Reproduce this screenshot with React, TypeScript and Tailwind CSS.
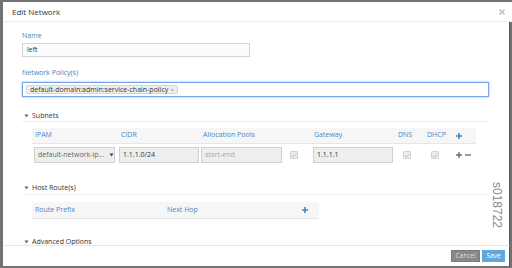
import { ReactNode } from "react";

function Check() {
  return (
    <div className="w-[8px] h-[8px] bg-[#ececec] border border-[#d2d2d2] rounded-[1px] flex items-center justify-center">
      <svg width="6" height="5" viewBox="0 0 6 5">
        <path d="M0.6 2.6 L2.3 4 L5.4 0.8" fill="none" stroke="#bdbdbd" strokeWidth="1" />
      </svg>
    </div>
  );
}

function Plus({ color = "#3a8ad0", sw = 1.6 }: { color?: string; sw?: number }) {
  return (
    <svg width="6" height="6" viewBox="0 0 6 6">
      <path d="M3 0 V6 M0 3 H6" stroke={color} strokeWidth={sw} />
    </svg>
  );
}

function Section({ title }: { title: string }) {
  return (
    <div className="flex items-center gap-[3px] pl-[2px] h-[9px] text-[7px] leading-[9px] text-[#333]">
      <svg width="5" height="4" viewBox="0 0 5 4">
        <path d="M0.5 0.5 H4.5 L2.5 3.5 Z" fill="#666" />
      </svg>
      <span>{title}</span>
    </div>
  );
}

function Field({ w, children, grey = true }: { w: string; children?: ReactNode; grey?: boolean }) {
  return (
    <div
      className={`${w} h-[16px] border border-[#d0d0d0] flex items-center pl-[3px] text-[7px] text-[#333] ${
        grey ? "bg-[#eeeeee]" : "bg-white"
      }`}
    >
      {children}
    </div>
  );
}

export default function App() {
  return (
    <div className="w-[512px] h-[268px] bg-[#727272] pt-[2px] pl-[3px] overflow-hidden relative font-['Open_Sans',sans-serif]">
      <div className="w-[509px] h-[264px] flex flex-col">
        {/* header */}
        <div className="h-[20px] bg-white border-b border-[#ececec] flex items-center justify-between pl-[9px] pr-[7px]">
          <span className="text-[8px] text-[#333]">Edit Network</span>
          <svg width="6" height="6" viewBox="0 0 6 6">
            <path d="M0.5 0.5 L5.5 5.5 M5.5 0.5 L0.5 5.5" stroke="#c4c4c4" strokeWidth="1.6" />
          </svg>
        </div>

        {/* body */}
        <div className="h-[223px] bg-white mr-[2px] border-r border-[#5a5a5a] pl-[19px] pt-[9px] overflow-hidden">
          <div className="text-[7px] leading-[9px] text-[#3f7fc0]">Name</div>
          <div className="mt-[3px] w-[228px] h-[14px] border border-[#d6d6d6] bg-[#fcfcfc] flex items-center pl-[4px] text-[7px] text-[#333]">
            left
          </div>

          <div className="mt-[11px] text-[7px] leading-[9px] text-[#3f7fc0]">Network Policy(s)</div>
          <div className="mt-[5px] w-[467px] h-[15px] border border-[#79a6ec] shadow-[0_0_2px_rgba(82,140,236,0.7)] bg-white flex items-center pl-[3px]">
            <div className="h-[9px] w-[152px] bg-[#efefef] border border-[#d4d4d4] rounded-[2px] flex items-center justify-between pl-[3px] pr-[3px] text-[7px] leading-[8px] text-[#333] whitespace-nowrap">
              <span>default-domain:admin:service-chain-policy</span>
              <span className="text-[6px] text-[#888]">×</span>
            </div>
          </div>

          {/* Subnets */}
          <div className="mt-[14px] w-[467px] border-b border-[#efefef] pb-[1px]">
            <Section title="Subnets" />
          </div>
          <div className="ml-[10px] mt-[6px] w-[444px]">
            <div className="h-[16px] bg-[#f6f6f6] border-b border-[#e6e6e6] flex items-center text-[7px] text-[#4a86c5]">
              <div className="w-[87px] pl-[3px]">IPAM</div>
              <div className="w-[82px] pl-[2px]">CIDR</div>
              <div className="w-[83px] pl-[2px]">Allocation Pools</div>
              <div className="w-[29px]" />
              <div className="w-[83px] pl-[1px]">Gateway</div>
              <div className="w-[29px] pl-[2px]">DNS</div>
              <div className="w-[27px] pl-[2px]">DHCP</div>
              <div className="w-[24px] pl-[4px] flex">
                <Plus />
              </div>
            </div>
            <div className="mt-[3px] h-[16px] flex items-center">
              <div className="w-[87px] pl-[2px]">
                <Field w="w-[81px]">
                  <span className="text-[#666]">default-network-ip...</span>
                  <svg className="ml-[5px]" width="5" height="4" viewBox="0 0 5 4">
                    <path d="M0.5 0.5 H4.5 L2.5 3.5 Z" fill="#444" />
                  </svg>
                </Field>
              </div>
              <div className="w-[82px]">
                <Field w="w-[80px]">1.1.1.0/24</Field>
              </div>
              <div className="w-[83px]">
                <Field w="w-[81px]">
                  <span className="text-[#aaa]">start-end</span>
                </Field>
              </div>
              <div className="w-[29px] pl-[6px]">
                <Check />
              </div>
              <div className="w-[83px]">
                <Field w="w-[80px]">1.1.1.1</Field>
              </div>
              <div className="w-[29px] pl-[7px]">
                <Check />
              </div>
              <div className="w-[27px] pl-[6px]">
                <Check />
              </div>
              <div className="w-[24px] pl-[4px] flex items-center gap-[3px]">
                <Plus color="#666" sw={1.3} />
                <svg width="6" height="6" viewBox="0 0 6 6">
                  <path d="M0 3 H6" stroke="#666" strokeWidth="1.3" />
                </svg>
              </div>
            </div>
          </div>

          {/* Host routes */}
          <div className="mt-[20px] w-[467px] border-b border-[#efefef] pb-[2px]">
            <Section title="Host Route(s)" />
          </div>
          <div className="ml-[10px] mt-[7px] w-[287px] h-[17px] bg-[#f6f6f6] border-b border-[#e6e6e6] flex items-center text-[7px] text-[#4a86c5]">
            <div className="w-[135px] pl-[3px]">Route Prefix</div>
            <div className="w-[135px]">Next Hop</div>
            <Plus />
          </div>

          <div className="mt-[18px]">
            <Section title="Advanced Options" />
          </div>
        </div>

        {/* footer */}
        <div className="h-[21px] bg-white mr-[2px] border-r border-[#5a5a5a] border-t border-t-[#e6e6e6] flex justify-end items-start pt-[4px] pr-[4px] gap-[2px]">
          <div className="w-[29px] h-[12px] bg-[#898989] border border-[#7a7a7a] text-white text-[6.5px] flex items-center justify-center [text-shadow:0_0_1px_#333]">
            Cancel
          </div>
          <div className="w-[23px] h-[12px] bg-[#5fa7dc] text-white text-[6.5px] flex items-center justify-center">
            Save
          </div>
        </div>
      </div>

      <div className="absolute left-[490px] top-[182px] [writing-mode:vertical-rl] text-[12px] leading-[13px] text-[#8a8a8a] font-['Liberation_Sans',sans-serif]">
        s018722
      </div>
    </div>
  );
}
